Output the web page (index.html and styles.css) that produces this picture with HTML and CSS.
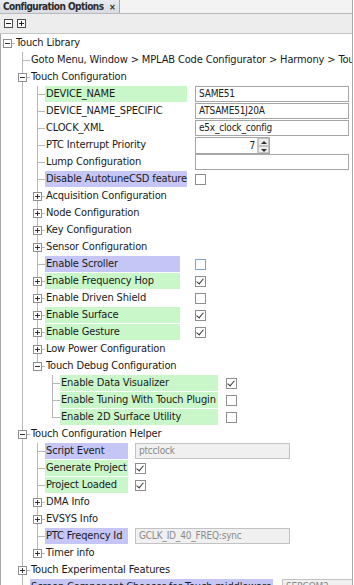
FILE: index.html
```html
<!DOCTYPE html>
<html lang="en">

<head>
    <meta charset="utf-8">
    <title>Configuration Options</title>
    <link rel="stylesheet" href="styles.css">
</head>

<body>
    <div class="panel">
        <div class="tabs">
            <div class="tab">Configuration Options <span class="close">×</span></div>
        </div>
        <div class="toolbar">
            <span class="tbtn minus"></span>
            <span class="tbtn plus"></span>
        </div>

        <div class="tree">
            <div class="row"><span class="g root"><i class="h minus"></i></span><span class="lbl">Touch Library</span></div>
            <div class="row"><span class="g"></span><span class="g tee"></span><span class="lbl">Goto Menu, Window &gt; MPLAB Code Configurator &gt; Harmony &gt; Touch Library</span></div>
            <div class="row"><span class="g"></span><span class="g tee"><i class="h minus"></i></span><span class="lbl">Touch Configuration</span></div>

            <div class="row"><span class="g"></span><span class="g pipe"></span><span class="g tee"></span><span class="lbl w1 green">DEVICE_NAME</span><span class="ed field">SAME51</span></div>
            <div class="row"><span class="g"></span><span class="g pipe"></span><span class="g tee"></span><span class="lbl w1">DEVICE_NAME_SPECIFIC</span><span class="ed field">ATSAME51J20A</span></div>
            <div class="row"><span class="g"></span><span class="g pipe"></span><span class="g tee"></span><span class="lbl w1">CLOCK_XML</span><span class="ed field">e5x_clock_config</span></div>
            <div class="row"><span class="g"></span><span class="g pipe"></span><span class="g tee"></span><span class="lbl w1">PTC Interrupt Priority</span>
                <span class="ed spin"><span class="val">7</span><span class="arrows"><b class="up"></b><b class="down"></b></span></span></div>
            <div class="row"><span class="g"></span><span class="g pipe"></span><span class="g tee"></span><span class="lbl w1">Lump Configuration</span><span class="ed field"></span></div>
            <div class="row"><span class="g"></span><span class="g pipe"></span><span class="g tee"></span><span class="lbl w1 purple">Disable AutotuneCSD feature</span><span class="ed cb"></span></div>

            <div class="row"><span class="g"></span><span class="g pipe"></span><span class="g tee"><i class="h plus"></i></span><span class="lbl">Acquisition Configuration</span></div>
            <div class="row"><span class="g"></span><span class="g pipe"></span><span class="g tee"><i class="h plus"></i></span><span class="lbl">Node Configuration</span></div>
            <div class="row"><span class="g"></span><span class="g pipe"></span><span class="g tee"><i class="h plus"></i></span><span class="lbl">Key Configuration</span></div>
            <div class="row"><span class="g"></span><span class="g pipe"></span><span class="g tee"><i class="h plus"></i></span><span class="lbl">Sensor Configuration</span></div>

            <div class="row"><span class="g"></span><span class="g pipe"></span><span class="g tee"></span><span class="lbl w2 purple">Enable Scroller</span><span class="ed cb focus"></span></div>
            <div class="row"><span class="g"></span><span class="g pipe"></span><span class="g tee"><i class="h plus"></i></span><span class="lbl w2 green">Enable Frequency Hop</span><span class="ed cb checked"></span></div>
            <div class="row"><span class="g"></span><span class="g pipe"></span><span class="g tee"><i class="h plus"></i></span><span class="lbl w2">Enable Driven Shield</span><span class="ed cb"></span></div>
            <div class="row"><span class="g"></span><span class="g pipe"></span><span class="g tee"><i class="h plus"></i></span><span class="lbl w2 green">Enable Surface</span><span class="ed cb checked"></span></div>
            <div class="row"><span class="g"></span><span class="g pipe"></span><span class="g tee"><i class="h plus"></i></span><span class="lbl w2 green">Enable Gesture</span><span class="ed cb checked"></span></div>
            <div class="row"><span class="g"></span><span class="g pipe"></span><span class="g tee"><i class="h plus"></i></span><span class="lbl">Low Power Configuration</span></div>
            <div class="row"><span class="g"></span><span class="g pipe"></span><span class="g elbow"><i class="h minus"></i></span><span class="lbl">Touch Debug Configuration</span></div>

            <div class="row"><span class="g"></span><span class="g pipe"></span><span class="g"></span><span class="g tee"></span><span class="lbl w3 green">Enable Data Visualizer</span><span class="ed cb checked"></span></div>
            <div class="row"><span class="g"></span><span class="g pipe"></span><span class="g"></span><span class="g tee"></span><span class="lbl w3 green">Enable Tuning With Touch Plugin</span><span class="ed cb"></span></div>
            <div class="row"><span class="g"></span><span class="g pipe"></span><span class="g"></span><span class="g elbow"></span><span class="lbl w3 green">Enable 2D Surface Utility</span><span class="ed cb"></span></div>

            <div class="row"><span class="g"></span><span class="g tee"><i class="h minus"></i></span><span class="lbl">Touch Configuration Helper</span></div>
            <div class="row"><span class="g"></span><span class="g pipe"></span><span class="g tee"></span><span class="lbl w4 purple">Script Event</span><span class="ed field off">ptcclock</span></div>
            <div class="row"><span class="g"></span><span class="g pipe"></span><span class="g tee"></span><span class="lbl w4 green">Generate Project</span><span class="ed cb checked"></span></div>
            <div class="row"><span class="g"></span><span class="g pipe"></span><span class="g tee"></span><span class="lbl w4 green">Project Loaded</span><span class="ed cb checked"></span></div>
            <div class="row"><span class="g"></span><span class="g pipe"></span><span class="g tee"><i class="h plus"></i></span><span class="lbl">DMA Info</span></div>
            <div class="row"><span class="g"></span><span class="g pipe"></span><span class="g tee"><i class="h plus"></i></span><span class="lbl">EVSYS Info</span></div>
            <div class="row"><span class="g"></span><span class="g pipe"></span><span class="g tee"></span><span class="lbl w4 purple">PTC Freqency Id</span><span class="ed field off">GCLK_ID_40_FREQ:sync</span></div>
            <div class="row"><span class="g"></span><span class="g pipe"></span><span class="g elbow"><i class="h plus"></i></span><span class="lbl">Timer info</span></div>

            <div class="row"><span class="g"></span><span class="g tee"><i class="h plus"></i></span><span class="lbl">Touch Experimental Features</span></div>
            <div class="row"><span class="g"></span><span class="g tee"></span><span class="lbl w5 purple">Screen Component Chooser for Touch middleware</span><span class="ed field off">SERCOM2</span></div>
        </div>
    </div>
</body>

</html>
```

FILE: styles.css
```css
body {
    margin: 0;
    background-color: #ffffff;
    font-family: "DejaVu Sans Condensed", "DejaVu Sans", sans-serif;
    font-size: 11px;
    letter-spacing: -0.15px;
    color: #1a1a1a;
}

.panel {
    width: 352px;
    height: 585px;
    border-right: 1px solid #a9a9a9;
    overflow: hidden;
}

/* tab strip */
.tabs {
    height: 13px;
    background-color: #f3f3f3;
    border-bottom: 1px solid #b9b9b9;
}

.tab {
    display: inline-block;
    height: 13px;
    padding: 0 4px 0 3px;
    line-height: 13px;
    font-size: 10px;
    font-weight: bold;
    letter-spacing: -0.55px;
    color: #2a2a2a;
    background: linear-gradient(#e8ebef, #d8dce2);
    border-right: 1px solid #a4a8ae;
    white-space: nowrap;
}

.close {
    margin-left: 3px;
    font-size: 9px;
}

/* toolbar */
.toolbar {
    height: 19px;
    background-color: #ededed;
    border-bottom: 1px solid #c6c6c6;
    display: flex;
    align-items: center;
    gap: 4px;
    padding-left: 4px;
}

.tbtn {
    position: relative;
    width: 7px;
    height: 7px;
    border: 1px solid #4a4a4a;
    background-color: #fafafa;
}

.tbtn::before {
    content: "";
    position: absolute;
    left: 1px;
    top: 3px;
    width: 5px;
    height: 1px;
    background-color: #222;
}

.tbtn.plus::after {
    content: "";
    position: absolute;
    left: 3px;
    top: 1px;
    width: 1px;
    height: 5px;
    background-color: #222;
}

/* tree */
.tree {
    padding-top: 1px;
    border-left: 1px solid #a9a9a9;
    height: 560px;
}

.row {
    display: flex;
    height: 17px;
    white-space: nowrap;
    overflow: hidden;
    margin-left: -1px;
}

.g {
    position: relative;
    flex: none;
    width: 15px;
    height: 17px;
}

.g.pipe::before,
.g.tee::before,
.g.elbow::before {
    content: "";
    position: absolute;
    left: 7px;
    top: 0;
    width: 1px;
    height: 17px;
    background-color: #b8b8b8;
}

.g.elbow::before {
    height: 9px;
}

.g.tee::after,
.g.elbow::after,
.g.root::after {
    content: "";
    position: absolute;
    left: 7px;
    top: 8px;
    width: 8px;
    height: 1px;
    background-color: #b8b8b8;
}

/* expand / collapse handle */
.h {
    position: absolute;
    z-index: 1;
    left: 3px;
    top: 4px;
    width: 7px;
    height: 7px;
    border: 1px solid #8f8f8f;
    background-color: #ffffff;
}

.h::before {
    content: "";
    position: absolute;
    left: 1px;
    top: 3px;
    width: 5px;
    height: 1px;
    background-color: #333;
}

.h.plus::after {
    content: "";
    position: absolute;
    left: 3px;
    top: 1px;
    width: 1px;
    height: 5px;
    background-color: #333;
}

.lbl {
    flex: none;
    height: 16px;
    line-height: 16px;
    padding-left: 1px;
    box-sizing: border-box;
}

.green {
    background-color: #c9f7c9;
}

.purple {
    background-color: #c5c6f6;
}

.w1 {
    width: 142px;
}

.w2 {
    width: 135px;
}

.w3 {
    width: 158px;
}

.w4 {
    width: 83px;
}

.w5 {
    width: 243px;
    overflow: hidden;
}

/* editors */
.ed {
    flex: none;
    margin-left: 8px;
}

.w2 + .ed {
    margin-left: 15px;
}

.w4 + .ed {
    margin-left: 7px;
}

.w5 + .ed {
    margin-left: 9px;
}

.field {
    box-sizing: border-box;
    width: 154px;
    height: 16px;
    border: 1px solid #a6a6a6;
    padding-left: 3px;
    font-size: 10px;
    letter-spacing: -0.2px;
    line-height: 14px;
    color: #222;
    background-color: #ffffff;
}

.field.off {
    width: 155px;
    background-color: #f0f0f0;
    border-color: #c2c2c2;
    color: #8a8a8a;
}

.spin {
    display: flex;
    box-sizing: border-box;
    width: 75px;
    height: 17px;
    border: 1px solid #a6a6a6;
    font-size: 10px;
}

.val {
    flex: 1;
    text-align: right;
    padding-right: 2px;
    line-height: 15px;
}

.arrows {
    display: flex;
    flex-direction: column;
    width: 11px;
    border-left: 1px solid #c8c8c8;
}

.arrows b {
    flex: 1;
    position: relative;
    background-color: #eeeeee;
    border: 1px solid #c4c4c4;
}

.arrows b::before {
    content: "";
    position: absolute;
    left: 2px;
    top: 2px;
    border-left: 3px solid transparent;
    border-right: 3px solid transparent;
}

.arrows .up::before {
    border-bottom: 3px solid #333;
}

.arrows .down::before {
    border-top: 3px solid #333;
}

.cb {
    position: relative;
    box-sizing: border-box;
    width: 11px;
    height: 11px;
    margin-top: 3px;
    border: 1px solid #8e8e8e;
    background-color: #ffffff;
}

.cb.focus {
    border-color: #7fa3c8;
}

.cb.checked::after {
    content: "";
    position: absolute;
    left: 2px;
    top: 0px;
    width: 3px;
    height: 6px;
    border-right: 1px solid #333;
    border-bottom: 1px solid #333;
    transform: rotate(40deg);
}
```
